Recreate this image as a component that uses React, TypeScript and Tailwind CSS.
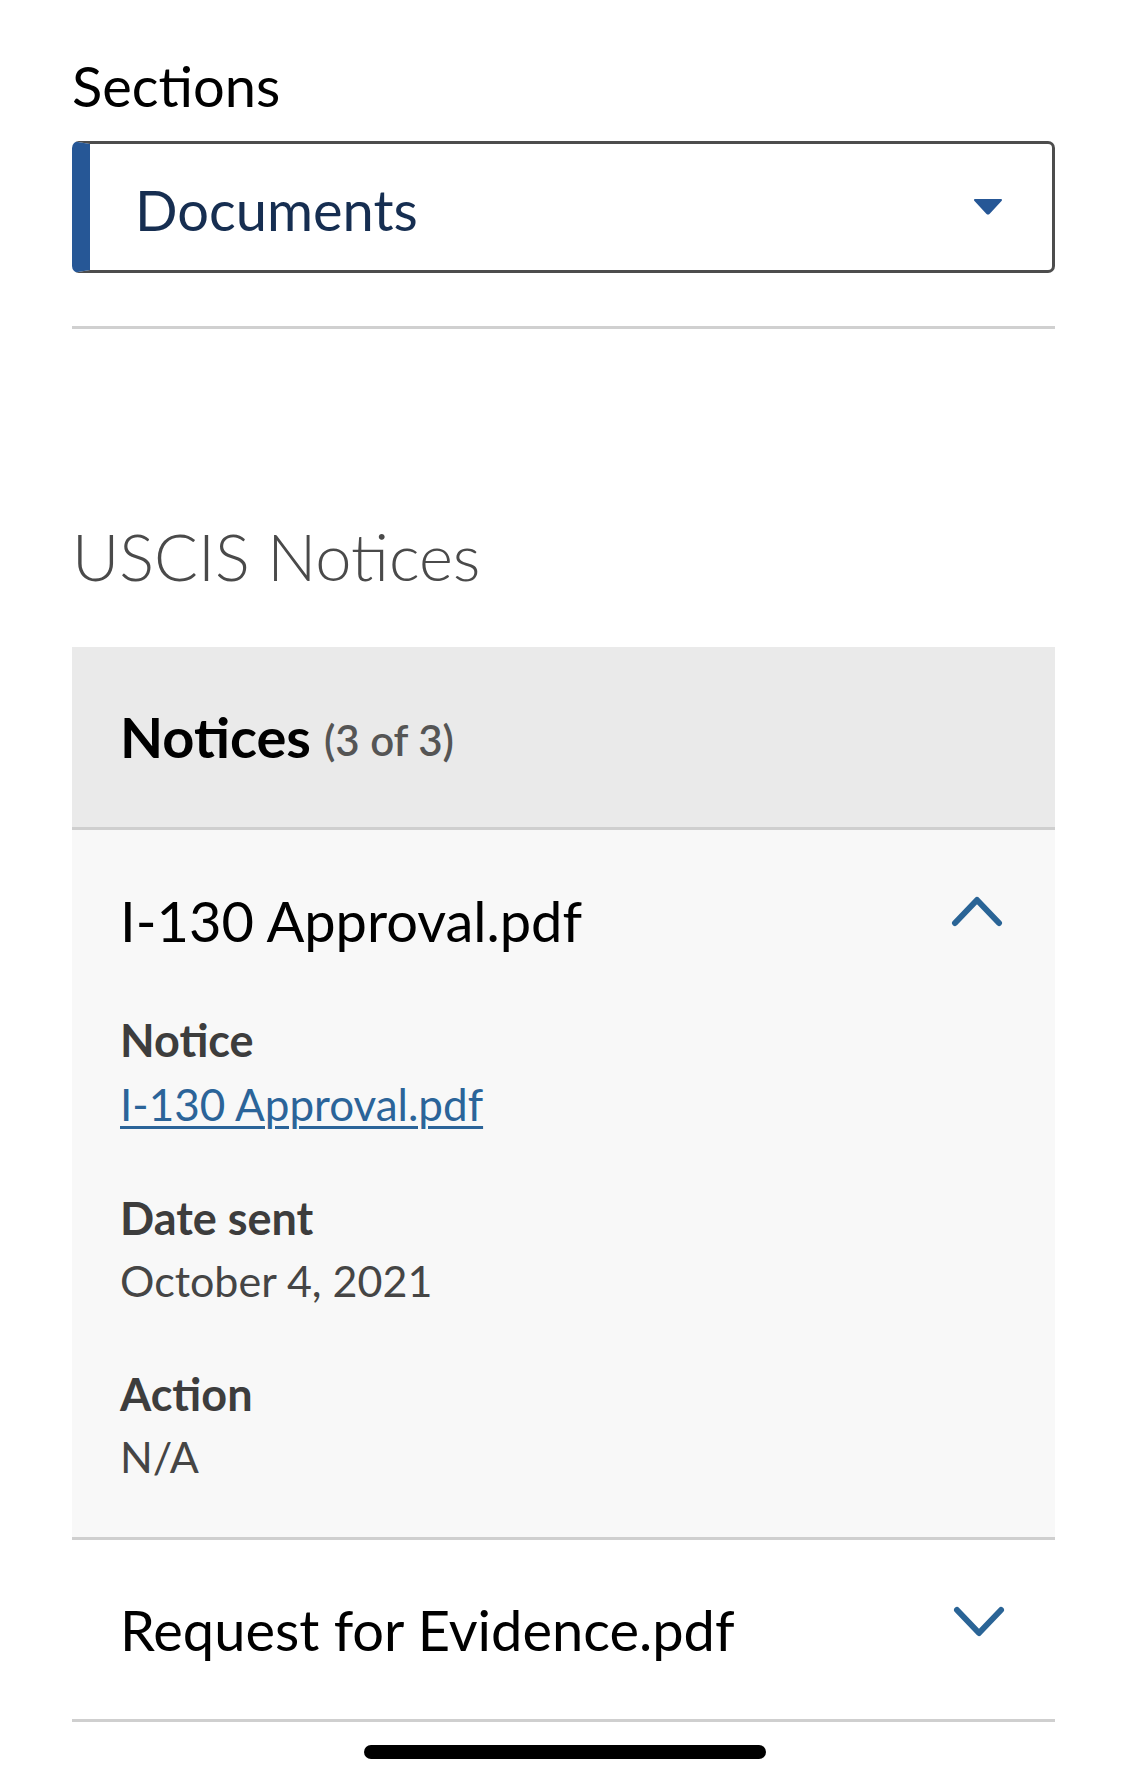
const details = [
  { label: 'Notice', value: 'I-130 Approval.pdf', link: true },
  { label: 'Date sent', value: 'October 4, 2021' },
  { label: 'Action', value: 'N/A' },
];

function Chevron({ up }: { up?: boolean }) {
  return (
    <svg width="52" height="32" viewBox="0 0 52 32" className="shrink-0">
      <path
        d={up ? 'M4 28 L26 5 L48 28' : 'M4 4 L26 27 L48 4'}
        fill="none"
        stroke="#2a6496"
        strokeWidth="6"
        strokeLinecap="round"
        strokeLinejoin="round"
      />
    </svg>
  );
}

export default function App() {
  return (
    <div className="relative w-[1125px] h-[1786px] bg-white font-['Lato',sans-serif] overflow-hidden">
      <div className="pl-[72px] pr-[70px] pt-[58px]">
        {/* section picker */}
        <p className="text-[56px] leading-none text-black">Sections</p>
        <div className="mt-[27px] h-[132px] flex items-center justify-between rounded-[7px] border-[3px] border-l-[18px] border-[#4d4d4d] border-l-[#265796] bg-white pl-[45px] pr-[49px]">
          <span className="pt-[5px] text-[56px] leading-none text-[#162e51]">Documents</span>
          <svg width="30" height="16" viewBox="0 0 30 16">
            <path d="M2 1 L28 1 L16 14 Q15 15 14 14 Z" fill="#265796" stroke="#265796" strokeWidth="2" strokeLinejoin="round" />
          </svg>
        </div>
        <div className="mt-[53px] h-[3px] bg-[#d0d0d0]" />

        {/* notices */}
        <h2 className="mt-[195px] text-[65px] leading-none font-light text-[#4a4a4a]">USCIS Notices</h2>

        <div className="mt-[58px]">
          <div className="h-[183px] flex items-center bg-[#eaeaea] border-b-[3px] border-[#cfcfcf] pl-[48px]">
            <span className="text-[56px] leading-none font-bold text-black">Notices</span>
            <span className="ml-[13px] mt-[6px] text-[42px] leading-none font-semibold text-[#555]">(3 of 3)</span>
          </div>

          <div className="bg-[#f8f8f8] border-b-[3px] border-[#cfcfcf] pl-[48px] pr-[52px] pt-[63px] pb-[59px]">
            <div className="flex items-start justify-between">
              <span className="text-[56px] leading-none text-black">I-130 Approval.pdf</span>
              <div className="mt-[2px]">
                <Chevron up />
              </div>
            </div>
            <div className="mt-[69px] flex flex-col gap-[70px]">
              {details.map((d) => (
                <div key={d.label} className="flex flex-col">
                  <span className="text-[45px] leading-none font-bold text-[#3d3d3d]">{d.label}</span>
                  {d.link ? (
                    <a className="mt-[19px] text-[44px] leading-none text-[#2b6499] underline decoration-[3px] underline-offset-[5px]">
                      {d.value}
                    </a>
                  ) : (
                    <span className="mt-[18px] text-[43px] leading-none text-[#454545]">{d.value}</span>
                  )}
                </div>
              ))}
            </div>
          </div>

          <div className="h-[182px] flex items-center justify-between border-b-[3px] border-[#cfcfcf] pl-[48px] pr-[50px]">
            <span className="text-[56px] leading-none text-black">Request for Evidence.pdf</span>
            <div className="mb-[16px]">
              <Chevron />
            </div>
          </div>
        </div>
      </div>

      {/* home indicator */}
      <div className="absolute left-[364px] top-[1745px] h-[14px] w-[402px] rounded-full bg-black" />
    </div>
  );
}
